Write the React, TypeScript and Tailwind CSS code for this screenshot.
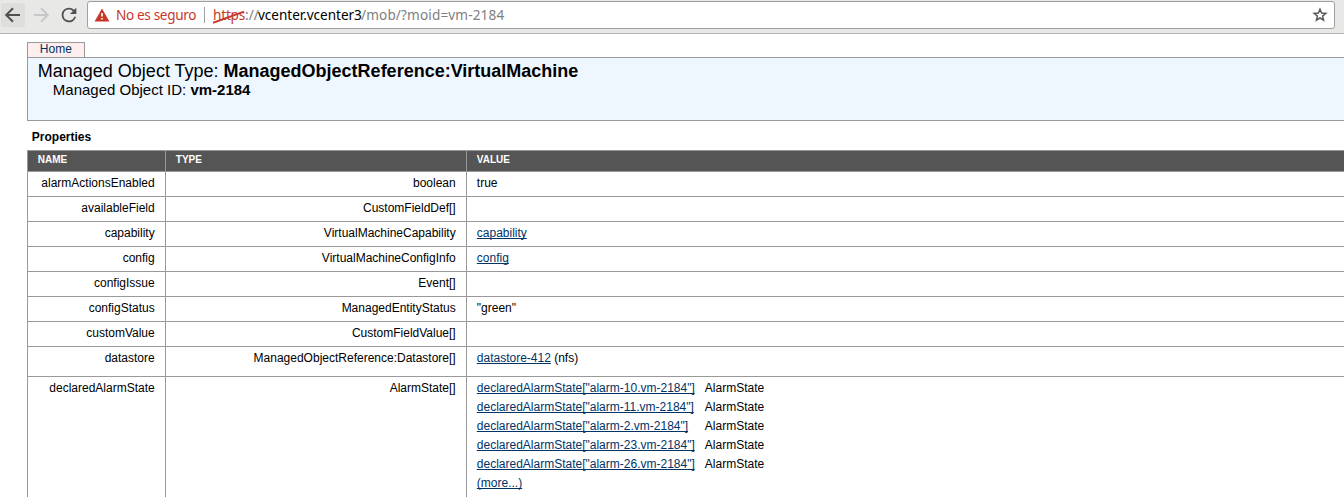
import type { ReactNode } from "react";

function Link({ children }: { children: ReactNode }) {
  return (
    <a href="#" className="text-[#003366] underline [text-decoration-skip-ink:none]">
      {children}
    </a>
  );
}

function Toolbar() {
  return (
    <div className="flex h-[34px] border-b border-[#b3b3b3] bg-[#e8e8e7] pl-px">
      <div className="mt-[3px] flex h-6 w-6 items-center justify-center rounded-[2px] bg-[#dededd]">
        <svg width="24" height="24" viewBox="0 0 24 24" fill="none" stroke="#505050" strokeWidth="2">
          <path d="M19 12H6M12 5.2L5.2 12l6.8 6.8" />
        </svg>
      </div>
      <div className="mt-[3px] ml-1 flex h-6 w-6 items-center justify-center">
        <svg width="24" height="24" viewBox="0 0 24 24" fill="none" stroke="#c8c8c8" strokeWidth="2">
          <path d="M5 12h13M12 5.2l6.8 6.8-6.8 6.8" />
        </svg>
      </div>
      <div className="mt-[3px] ml-1 flex h-6 w-6 items-center justify-center">
        <svg width="22" height="22" viewBox="0 0 24 24" fill="#505050">
          <path d="M17.65 6.35A7.96 7.96 0 0 0 12 4a8 8 0 1 0 7.73 10h-2.08A6 6 0 1 1 12 6c1.66 0 3.14.69 4.22 1.78L13 11h7V4z" />
        </svg>
      </div>
      <div className="mt-px ml-[6px] flex h-7 w-[1248px] items-center rounded-[3px] border border-[#a0a0a0] bg-white px-[6px] font-['Noto_Sans',sans-serif] text-[13.6px]">
        <svg width="16" height="14" viewBox="0 0 16 14">
          <path d="M8 0.6L15.4 13.4H0.6z" fill="#c53929" />
          <path d="M7.2 5h1.6v3.6H7.2zM7.2 10h1.6v1.6H7.2z" fill="#fff" />
        </svg>
        <span className="ml-[6px] w-[80px] tracking-[-0.35px] whitespace-nowrap text-[#c53929]">No es seguro</span>
        <div className="ml-[8px] h-4 w-px bg-[#a0a0a0]" />
        <span className="ml-[8px] flex whitespace-nowrap text-[#808080]">
          <span className="relative w-8 tracking-[-0.2px] text-[#c53929]">
            https
            <svg className="absolute top-0 left-0" width="33" height="20" viewBox="0 0 33 20" fill="none">
              <path d="M0 14.8L31 3.6" stroke="#c53929" strokeWidth="2" />
            </svg>
          </span>
          <span className="w-[13px]">://</span>
          <span className="w-[103px] tracking-[-0.05px] text-black">vcenter.vcenter3</span>
          <span className="tracking-[0.13px]">/mob/?moid=vm-2184</span>
        </span>
        <svg className="ml-auto" width="16" height="16" viewBox="0 0 16 16" fill="none" stroke="#5a5a5a" strokeWidth="1.5">
          <path d="M8 2.2l1.6 3.9 4.2.3-3.2 2.7 1 4.1L8 11l-3.6 2.2 1-4.1-3.2-2.7 4.2-.3z" />
        </svg>
      </div>
    </div>
  );
}

const alarms = ["alarm-10", "alarm-11", "alarm-2", "alarm-23", "alarm-26"];

function AlarmList() {
  return (
    <div className="grid grid-cols-[218px_max-content] gap-x-[10px] gap-y-[5px]">
      {alarms.map((id) => (
        <div key={id} className="contents">
          <div>
            <Link>{`declaredAlarmState["${id}.vm-2184"]`}</Link>
          </div>
          <div>AlarmState</div>
        </div>
      ))}
      <div>
        <Link>(more...)</Link>
      </div>
    </div>
  );
}

type Row = { name: string; type: string; value?: ReactNode; height: string };

const rows: Row[] = [
  { name: "alarmActionsEnabled", type: "boolean", value: "true", height: "h-[25px]" },
  { name: "availableField", type: "CustomFieldDef[]", height: "h-[25px]" },
  { name: "capability", type: "VirtualMachineCapability", value: <Link>capability</Link>, height: "h-[25px]" },
  { name: "config", type: "VirtualMachineConfigInfo", value: <Link>config</Link>, height: "h-[25px]" },
  { name: "configIssue", type: "Event[]", height: "h-[25px]" },
  { name: "configStatus", type: "ManagedEntityStatus", value: '"green"', height: "h-[25px]" },
  { name: "customValue", type: "CustomFieldValue[]", height: "h-[25px]" },
  {
    name: "datastore",
    type: "ManagedObjectReference:Datastore[]",
    value: (
      <>
        <Link>datastore-412</Link> (nfs)
      </>
    ),
    height: "h-[30px]",
  },
  { name: "declaredAlarmState", type: "AlarmState[]", value: <AlarmList />, height: "h-[126px]" },
];

export default function App() {
  return (
    <div className="h-[497px] w-full overflow-hidden bg-white font-['Liberation_Sans',Arial,sans-serif] text-[12px] leading-[14px] text-black">
      <Toolbar />
      <div className="pt-2 pl-[27px]">
        <div className="flex h-[15px] w-[58px] border-x border-t border-[#999999] bg-[#ffeeee] pl-[11.8px] text-[#003366]">
          <a href="#" className="-mt-px">Home</a>
        </div>
        <div className="h-16 border-y border-l border-[#999999] bg-[#eef7ff] pl-[9.8px]">
          <div className="pt-[3px] text-[18px] leading-[20px]">
            Managed Object Type: <b>ManagedObjectReference:VirtualMachine</b>
          </div>
          <div className="pl-[15px] text-[15px] leading-[18px]">
            Managed Object ID: <b>vm-2184</b>
          </div>
        </div>
        <div className="h-[29px] pt-[9px] pl-[4.8px] font-bold">Properties</div>
        <div className="grid h-[21px] grid-cols-[138px_301px_1fr] border-t border-[#999999] bg-[#555555] text-[10px] leading-[12px] font-bold text-white">
          <div className="border-l border-[#999999] pt-[3px] pl-[9.8px]">NAME</div>
          <div className="border-l border-[#999999] pt-[3px] pl-[9.8px]">TYPE</div>
          <div className="border-l border-[#999999] pt-[3px] pl-[9.8px]">VALUE</div>
        </div>
        {rows.map((row) => (
          <div key={row.name} className={`grid grid-cols-[138px_301px_1fr] border-t border-[#999999] ${row.height}`}>
            <div className="border-l border-[#999999] pt-1 pr-[10.3px] text-right">{row.name}</div>
            <div className="border-l border-[#999999] pt-1 pr-[10.3px] text-right">{row.type}</div>
            <div className="border-l border-[#999999] pt-1 pl-[9.8px]">{row.value}</div>
          </div>
        ))}
      </div>
    </div>
  );
}
